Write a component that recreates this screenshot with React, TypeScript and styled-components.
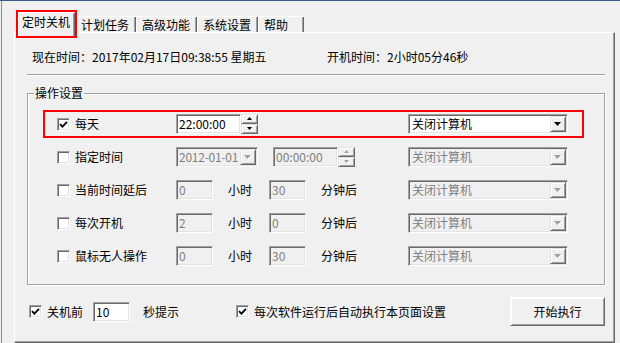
import React from "react";
import styled, { createGlobalStyle, css } from "styled-components";

const Global = createGlobalStyle`
  html, body { margin: 0; padding: 0; background: #f0f0f0; }
  body {
    font-family: "Noto Sans CJK SC", "Liberation Sans", sans-serif;
    font-size: 12px;
    line-height: 16px;
    color: #000;
  }
  * { box-sizing: border-box; }
`;

const sunken = css`
  border-top: 1px solid #a0a0a0;
  border-left: 1px solid #a0a0a0;
  border-bottom: 1px solid #fff;
  border-right: 1px solid #fff;
  box-shadow: inset 1px 1px 0 #696969, inset -1px -1px 0 #e3e3e3;
`;

const raised = css`
  border-top: 1px solid #e3e3e3;
  border-left: 1px solid #e3e3e3;
  border-bottom: 1px solid #696969;
  border-right: 1px solid #696969;
  box-shadow: inset 1px 1px 0 #fff, inset -1px -1px 0 #a0a0a0;
  background: #f0f0f0;
`;

const Frame = styled.div`
  width: 620px;
  height: 343px;
  overflow: hidden;
  display: flex;
  flex-direction: column;
  border-top: 1px solid #3b5b82;
  padding: 0 5px 0 14px;
  background: #f0f0f0;
  box-shadow: inset 1px 0 0 #f0f0f0, inset 2px 0 0 #6e92bd;
`;

const TabStrip = styled.div`
  height: 31px;
  flex: none;
  display: flex;
  align-items: flex-end;
  padding-left: 4px;
  position: relative;
  z-index: 1;
`;

const Tab = styled.div<{ $active?: boolean }>`
  display: flex;
  align-items: center;
  height: 16px;
  min-width: 46px;
  padding: 0 7px 0 5px;
  border-left: 1px solid #fff;
  border-top: 1px solid #fff;
  box-shadow: inset -1px 0 0 #696969, inset -2px 0 0 #a0a0a0;
  white-space: nowrap;
  background: #f0f0f0;
  ${(p) =>
    p.$active &&
    css`
      height: 24px;
      margin-bottom: -4px;
      align-items: flex-start;
      padding: 1px 5px 0 3px;
      outline: 2px solid #ff0000;
      position: relative;
      z-index: 2;
    `}
`;

const Panel = styled.div`
  flex: 1;
  display: flex;
  flex-direction: column;
  border-top: 1px solid #fff;
  border-left: 1px solid #fff;
  border-right: 1px solid #696969;
  border-bottom: 1px solid #696969;
  box-shadow: inset -1px -1px 0 #a0a0a0;
  padding: 0 9px 0 12px;
`;

const InfoRow = styled.div`
  display: grid;
  grid-template-columns: 295px auto;
  padding: 16px 0 0 5px;
  white-space: nowrap;
`;

const Rule = styled.div`
  margin-top: 9px;
  height: 2px;
  border-top: 1px solid #a0a0a0;
  border-bottom: 1px solid #fff;
`;

const Group = styled.fieldset`
  margin: 9px 0 0 0;
  padding: 0;
  min-width: 0;
  border: 1px solid #a0a0a0;
  box-shadow: inset 1px 1px 0 #fff, 1px 1px 0 #fff;
`;

const Legend = styled.legend`
  margin-left: 6px;
  padding: 0 1px;
  line-height: 16px;
`;

const Rows = styled.div`
  display: flex;
  flex-direction: column;
  gap: 5px;
  padding: 9px 20px 14px 15px;
`;

const Row = styled.div<{ $highlight?: boolean }>`
  display: grid;
  grid-template-columns: 119px 232px 160px;
  align-items: center;
  height: 28px;
  padding-left: 12px;
  border: 2px solid ${(p) => (p.$highlight ? "#ff0000" : "transparent")};
`;

const CheckLabel = styled.label<{ $ml?: number }>`
  display: flex;
  align-items: center;
  gap: 5px;
  white-space: nowrap;
  margin-left: ${(p) => p.$ml ?? 0}px;
`;

const Box = styled.span`
  width: 13px;
  height: 13px;
  flex: none;
  background: #fff;
  ${sunken}
  display: flex;
  align-items: center;
  justify-content: center;
`;

const Controls = styled.div`
  display: flex;
  align-items: center;
`;

const Field = styled.div<{ $w: number; $disabled?: boolean; $ml?: number }>`
  width: ${(p) => p.$w}px;
  height: 20px;
  flex: none;
  ${sunken}
  background: ${(p) => (p.$disabled ? "#f0f0f0" : "#fff")};
  color: ${(p) => (p.$disabled ? "#808080" : "#000")};
  padding: 0 2px;
  line-height: 18px;
  white-space: nowrap;
  overflow: hidden;
  margin-left: ${(p) => p.$ml ?? 0}px;
`;

const Spin = styled.div`
  display: flex;
  flex-direction: column;
  width: 17px;
  height: 20px;
  flex: none;
`;

const SpinBtn = styled.div`
  ${raised}
  height: 10px;
  display: flex;
  align-items: center;
  justify-content: center;
`;

const Combo = styled.div<{ $w: number; $disabled?: boolean }>`
  width: ${(p) => p.$w}px;
  height: 20px;
  flex: none;
  ${sunken}
  background: ${(p) => (p.$disabled ? "#f0f0f0" : "#fff")};
  color: ${(p) => (p.$disabled ? "#808080" : "#000")};
  padding: 1px;
  display: flex;
`;

const ComboText = styled.span<{ $tight?: boolean }>`
  flex: 1;
  min-width: 0;
  padding-left: ${(p) => (p.$tight ? 1 : 2)}px;
  letter-spacing: ${(p) => (p.$tight ? "-0.25px" : "0")};
  line-height: 16px;
  white-space: nowrap;
  overflow: hidden;
`;

const DropBtn = styled.span`
  ${raised}
  width: 16px;
  height: 16px;
  flex: none;
  display: flex;
  align-items: center;
  justify-content: center;
`;

const Unit = styled.span<{ $ml?: number; $mr?: number }>`
  margin-left: ${(p) => p.$ml ?? 0}px;
  margin-right: ${(p) => p.$mr ?? 0}px;
  white-space: nowrap;
`;

const BottomRow = styled.div`
  display: flex;
  align-items: center;
  height: 29px;
  margin-top: 12px;
  padding-left: 2px;
`;

const Button = styled.button`
  margin-left: auto;
  width: 95px;
  height: 29px;
  ${raised}
  border-top-color: #fff;
  border-left-color: #fff;
  font: inherit;
  color: #000;
  padding: 0;
`;

const Check = () => (
  <svg width="9" height="9" viewBox="0 0 9 9">
    <path d="M1 4.2 L3.4 6.6 L8 1.8" fill="none" stroke="#000" strokeWidth="1.8" />
  </svg>
);

const Checkbox = ({ checked }: { checked?: boolean }) => <Box>{checked && <Check />}</Box>;

const Arrow = ({ up, disabled, small }: { up?: boolean; disabled?: boolean; small?: boolean }) => {
  const w = small ? 5 : 7;
  const h = small ? 3 : 4;
  const pts = up ? `0,${h} ${w},${h} ${w / 2},0` : `0,0 ${w},0 ${w / 2},${h}`;
  return (
    <svg width={w + 1} height={h + 1} viewBox={`0 0 ${w + 1} ${h + 1}`}>
      {disabled && <polygon points={pts} fill="#fff" transform="translate(1,1)" />}
      <polygon points={pts} fill={disabled ? "#a0a0a0" : "#000"} />
    </svg>
  );
};

const TimeSpin = ({ value, disabled, ml }: { value: string; disabled?: boolean; ml?: number }) => (
  <>
    <Field $w={65} $disabled={disabled} $ml={ml}>
      {value}
    </Field>
    <Spin>
      <SpinBtn>
        <Arrow up small disabled={disabled} />
      </SpinBtn>
      <SpinBtn>
        <Arrow small disabled={disabled} />
      </SpinBtn>
    </Spin>
  </>
);

const Select = ({
  w,
  value,
  disabled,
  tight,
}: {
  w: number;
  value: string;
  disabled?: boolean;
  tight?: boolean;
}) => (
  <Combo $w={w} $disabled={disabled}>
    <ComboText $tight={tight}>{value}</ComboText>
    <DropBtn>
      <Arrow disabled={disabled} />
    </DropBtn>
  </Combo>
);

type Delay = { label: string; h: string; m: string };
const delays: Delay[] = [
  { label: "当前时间延后", h: "0", m: "30" },
  { label: "每次开机", h: "2", m: "0" },
  { label: "鼠标无人操作", h: "0", m: "30" },
];

const tabs = ["定时关机", "计划任务", "高级功能", "系统设置", "帮助"];

export default function App() {
  return (
    <>
      <Global />
      <Frame>
        <TabStrip>
          {tabs.map((t, i) => (
            <Tab key={t} $active={i === 0}>
              {t}
            </Tab>
          ))}
        </TabStrip>
        <Panel>
          <InfoRow>
            <span>现在时间：2017年02月17日09:38:55 星期五</span>
            <span>开机时间：2小时05分46秒</span>
          </InfoRow>
          <Rule />
          <Group>
            <Legend>操作设置</Legend>
            <Rows>
              <Row $highlight>
                <CheckLabel>
                  <Checkbox checked />
                  每天
                </CheckLabel>
                <Controls>
                  <TimeSpin value="22:00:00" />
                </Controls>
                <Select w={160} value="关闭计算机" />
              </Row>
              <Row>
                <CheckLabel>
                  <Checkbox />
                  指定时间
                </CheckLabel>
                <Controls>
                  <Select w={82} value="2012-01-01" disabled tight />
                  <TimeSpin value="00:00:00" disabled ml={15} />
                </Controls>
                <Select w={160} value="关闭计算机" disabled />
              </Row>
              {delays.map((d) => (
                <Row key={d.label}>
                  <CheckLabel>
                    <Checkbox />
                    {d.label}
                  </CheckLabel>
                  <Controls>
                    <Field $w={37} $disabled>
                      {d.h}
                    </Field>
                    <Unit $ml={15} $mr={17}>
                      小时
                    </Unit>
                    <Field $w={37} $disabled>
                      {d.m}
                    </Field>
                    <Unit $ml={15}>分钟后</Unit>
                  </Controls>
                  <Select w={160} value="关闭计算机" disabled />
                </Row>
              ))}
            </Rows>
          </Group>
          <BottomRow>
            <CheckLabel>
              <Checkbox checked />
              关机前
            </CheckLabel>
            <Field $w={37} $ml={10}>
              10
            </Field>
            <Unit $ml={13}>秒提示</Unit>
            <CheckLabel $ml={57}>
              <Checkbox checked />
              每次软件运行后自动执行本页面设置
            </CheckLabel>
            <Button>开始执行</Button>
          </BottomRow>
        </Panel>
      </Frame>
    </>
  );
}
